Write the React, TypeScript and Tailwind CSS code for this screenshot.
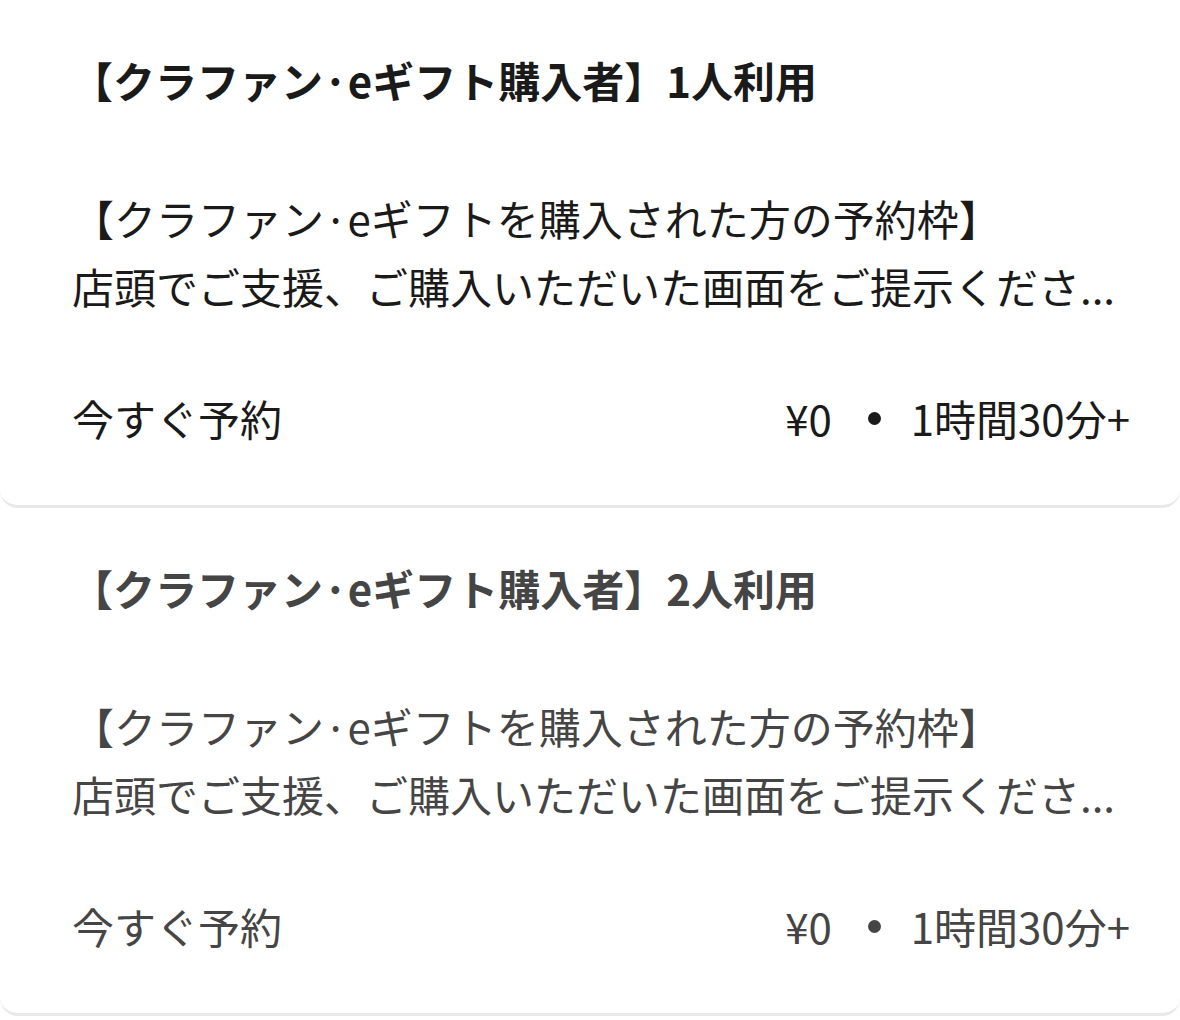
import React from "react";

type Plan = { title: string; muted: boolean };

const plans: Plan[] = [
  { title: "【クラファン·eギフト購入者】1人利用", muted: false },
  { title: "【クラファン·eギフト購入者】2人利用", muted: true },
];

function Card({ plan }: { plan: Plan }) {
  const color = plan.muted ? "text-[#454545]" : "text-[#1a1a1a]";
  return (
    <div
      className={`bg-white rounded-b-[18px] border-b-[3px] border-[#e9e9e9] pl-[72px] pr-[50px] pt-[56px] pb-[63px] ${color}`}
    >
      <div className="text-[42px] font-bold leading-[48px] whitespace-nowrap -ml-[1px]">
        {plan.title}
      </div>
      <div className="mt-[80px] text-[42px] leading-[68px] whitespace-nowrap">
        <div>【クラファン·eギフトを購入された方の予約枠】</div>
        <div>店頭でご支援、ご購入いただいた画面をご提示くださ...</div>
      </div>
      <div className="mt-[74px] flex items-baseline justify-between text-[42px] leading-[48px]">
        <span>今すぐ予約</span>
        <span className="flex items-center whitespace-nowrap">
          <span>¥0</span>
          <span className="ml-[36px] mr-[30px] w-[13px] h-[13px] rounded-full bg-current" />
          <span>1時間30分+</span>
        </span>
      </div>
    </div>
  );
}

export default function App() {
  return (
    <div
      className="w-[1180px] h-[1020px] bg-white overflow-hidden"
      style={{ fontFamily: '"Noto Sans CJK JP", "Noto Sans", sans-serif' }}
    >
      <div className="flex flex-col">
        {plans.map((p) => (
          <Card key={p.title} plan={p} />
        ))}
      </div>
    </div>
  );
}
